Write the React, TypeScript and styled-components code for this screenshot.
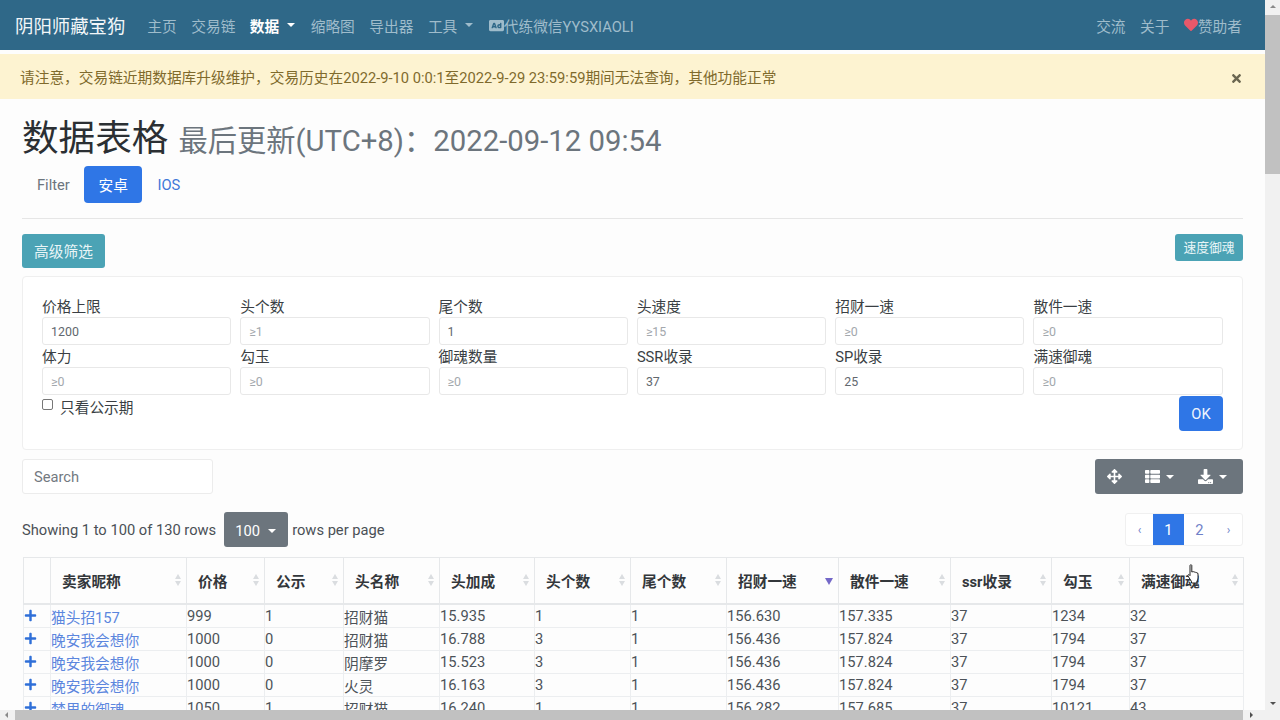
import { styled, createGlobalStyle } from "styled-components";
import { FaAd, FaArrowsAlt, FaDownload, FaHeart, FaPlus, FaThList, FaTimes } from "react-icons/fa";

const GlobalStyle = createGlobalStyle`
  html, body {
    margin: 0;
    padding: 0;
    height: 100%;
    overflow: hidden;
    background: #fdfdfd;
  }
  * {
    box-sizing: border-box;
  }
  body {
    font-family: Roboto, "Noto Sans CJK SC", sans-serif;
    font-size: 14.7px;
    color: #3a3f44;
  }
`;

const Shell = styled.div`
  position: relative;
  width: 1280px;
  height: 720px;
  display: grid;
  grid-template-columns: 1265px 15px;
  grid-template-rows: 710px 10px;
  overflow: hidden;
  background: #fdfdfd;
`;

const Page = styled.div`
  overflow: hidden;
`;

const VScroll = styled.div`
  background: #f1f1f1;
  display: flex;
  flex-direction: column;
  align-items: stretch;
  justify-content: space-between;
  padding-top: 5px;
  padding-bottom: 5px;
`;

const VThumb = styled.div`
  height: 159px;
  margin-top: 7px;
  margin-bottom: auto;
  background: #c1c1c1;
`;

const Arrow = styled.span<{ $dir: "up" | "down" | "left" | "right" }>`
  display: block;
  flex: none;
  align-self: center;
  width: 0;
  height: 0;
  border-style: solid;
  border-color: transparent;
  border-width: 3.5px;
  ${(p) => (p.$dir === "up" ? "border-bottom-color: #8a8a8a; border-top-width: 0;" : "")}
  ${(p) => (p.$dir === "down" ? "border-top-color: #505050; border-bottom-width: 0;" : "")}
  ${(p) => (p.$dir === "left" ? "border-right-color: #8a8a8a; border-left-width: 0;" : "")}
  ${(p) => (p.$dir === "right" ? "border-left-color: #505050; border-right-width: 0;" : "")}
`;

const HScroll = styled.div`
  background: #f1f1f1;
  padding: 0 5px;
  display: flex;
  align-items: center;
  gap: 7px;
  grid-column: 1;
  height: 10px;
`;

const HThumb = styled.div`
  flex: none;
  width: 1228px;
  height: 100%;
  background: #c1c1c1;
`;

const Corner = styled.div`
  background: #f1f1f1;
`;

const Nav = styled.nav`
  height: 50px;
  background: #2f6888;
  display: flex;
  align-items: center;
  padding: 0 23px 0 15px;
`;

const Brand = styled.div`
  font-size: 18.4px;
  color: #f2f6f8;
  margin-right: 22px;
  white-space: nowrap;
`;

const NavItem = styled.div<{ $active?: boolean; $last?: boolean }>`
  display: flex;
  align-items: center;
  white-space: nowrap;
  margin-right: ${(p) => (p.$last ? 0 : 14.5)}px;
  color: ${(p) => (p.$active ? "#ffffff" : "#9fbccb")};
  font-weight: ${(p) => (p.$active ? 700 : 400)};
`;

const NavSpacer = styled.div`
  flex: 1;
`;

const Caret = styled.span<{ $gap?: number }>`
  display: inline-block;
  margin-left: ${(p) => p.$gap ?? 8}px;
  margin-right: 1px;
  border-top: 4.5px solid currentColor;
  border-left: 4.5px solid transparent;
  border-right: 4.5px solid transparent;
`;

const Alert = styled.div`
  margin-top: 4px;
  height: 45px;
  background: #fdf3d1;
  color: #7f6a2c;
  display: flex;
  align-items: center;
  justify-content: space-between;
  padding: 0 22px 0 20px;
`;

const CloseIcon = styled(FaTimes)`
  color: #6b6650;
  font-size: 13px;
  margin-top: 3px;
`;

const Content = styled.div`
  padding: 0 22px;
`;

const Title = styled.h1`
  margin: 14px 0 0;
  height: 53px;
  font-size: 36.6px;
  line-height: 52px;
  font-weight: 400;
  color: #2b2f33;
  white-space: nowrap;
`;

const TitleNote = styled.small`
  font-size: 29.3px;
  color: #6c757d;
  margin-left: 1px;
`;

const Tabs = styled.div`
  display: flex;
  align-items: center;
  margin-top: 0;
  height: 37px;
  padding-left: 15px;
`;

const Tab = styled.div<{ $kind?: "muted" | "active" | "link" }>`
  height: 37px;
  display: flex;
  align-items: center;
  border-radius: 4px;
  margin-right: ${(p) => (p.$kind === "muted" ? 14 : 15)}px;
  color: ${(p) => (p.$kind === "active" ? "#fff" : p.$kind === "link" ? "#3f78d8" : "#6c757d")};
  background: ${(p) => (p.$kind === "active" ? "#2f76e6" : "transparent")};
  padding: ${(p) => (p.$kind === "active" ? "0 14.6px" : "0")};
`;

const Rule = styled.hr`
  border: 0;
  border-top: 1px solid #e6e6e6;
  margin: 15px 0 15px;
`;

const ActionRow = styled.div`
  display: flex;
  justify-content: space-between;
  align-items: flex-start;
  height: 42px;
`;

const TealButton = styled.div<{ $small?: boolean }>`
  background: #4ba3b5;
  color: #e9f5f7;
  border-radius: 3px;
  display: flex;
  align-items: center;
  justify-content: center;
  width: ${(p) => (p.$small ? "68px" : "83px")};
  height: ${(p) => (p.$small ? "27px" : "34px")};
  padding-bottom: 2px;
  font-size: ${(p) => (p.$small ? "12.8px" : "14.7px")};
`;

const FilterPanel = styled.section`
  position: relative;
  height: 174px;
  background: #fff;
  border: 1px solid #efefef;
  border-radius: 4px;
  padding: 19px 19px 0;
`;

const FilterGrid = styled.div`
  display: grid;
  grid-template-columns: repeat(6, 189.3px);
  column-gap: 9px;
`;

const Field = styled.label`
  display: flex;
  flex-direction: column;
  height: 50px;
`;

const FieldLabel = styled.span`
  height: 21px;
  line-height: 22px;
  color: #3a3f44;
  white-space: nowrap;
`;

const FieldInput = styled.div<{ $placeholder?: boolean }>`
  height: 28px;
  border: 1px solid #e8e8e8;
  border-radius: 3px;
  background: #fff;
  padding: 0 8px;
  display: flex;
  align-items: center;
  font-size: 12.4px;
  color: ${(p) => (p.$placeholder ? "#a3a8ad" : "#62686e")};
`;

const CheckRow = styled.div`
  display: flex;
  align-items: center;
  margin-top: -1px;
  height: 22px;
`;

const CheckBox = styled.span`
  width: 11px;
  height: 11px;
  border: 1px solid #777;
  border-radius: 2px;
  background: #fff;
  margin-right: 7px;
  margin-top: -3px;
`;

// the OK button sits over the bottom corner of the filter grid
const OkButton = styled.div`
  position: absolute;
  right: 19px;
  top: 119px;
  width: 44px;
  height: 35px;
  border-radius: 4px;
  background: #2f76e6;
  color: #eef4fd;
  display: flex;
  align-items: center;
  justify-content: center;
`;

const SearchRow = styled.div`
  display: flex;
  justify-content: space-between;
  margin-top: 9px;
  height: 35px;
`;

const SearchBox = styled.div`
  width: 191px;
  height: 35px;
  background: #fff;
  border: 1px solid #ececec;
  border-radius: 3px;
  padding: 0 11px;
  display: flex;
  align-items: center;
  color: #73797f;
`;

const ToolGroup = styled.div`
  width: 148px;
  height: 35px;
  background: #6c757d;
  border-radius: 3px;
  color: #fff;
  display: flex;
  align-items: center;
  font-size: 15px;
`;

const ToolSlot = styled.div<{ $width: number }>`
  width: ${(p) => p.$width}px;
  display: flex;
  align-items: center;
  justify-content: center;
`;

const InfoRow = styled.div`
  display: flex;
  justify-content: space-between;
  align-items: center;
  height: 35px;
  margin-top: 18px;
`;

const InfoText = styled.div`
  display: flex;
  align-items: center;
  color: #4a5056;
`;

const PageSize = styled.div`
  width: 64px;
  height: 35px;
  margin: 0 4px 0 8px;
  border-radius: 3px;
  background: #6c757d;
  color: #fff;
  display: flex;
  align-items: center;
  justify-content: center;
  padding-top: 2px;
`;

const Pager = styled.div`
  display: flex;
  height: 33px;
  background: #fff;
  border: 1px solid #f0f0f0;
  border-radius: 3px;
`;

const PageCell = styled.div<{ $active?: boolean; $w: number; $small?: boolean }>`
  width: ${(p) => p.$w}px;
  display: flex;
  align-items: center;
  justify-content: center;
  background: ${(p) => (p.$active ? "#2f76e6" : "transparent")};
  color: ${(p) => (p.$active ? "#fff" : "#6f80c8")};
  font-size: ${(p) => (p.$small ? "12px" : "14.7px")};
`;

const DataTable = styled.table`
  margin-top: 10px;
  width: 1220px;
  margin-left: 1px;
  table-layout: fixed;
  border-collapse: collapse;
  background: #fdfdfd;
`;

const HeadCell = styled.th`
  position: relative;
  height: 46px;
  padding: 0 0 0 11px;
  text-align: left;
  font-weight: 700;
  font-size: 14.7px;
  color: #33373b;
  border: 1px solid #e6e8ea;
  border-bottom-width: 2px;
  white-space: nowrap;
`;

const SortMark = styled.span`
  position: absolute;
  right: 5px;
  top: 50%;
  transform: translateY(-50%);
  display: flex;
  flex-direction: column;
  gap: 2px;
  color: #dadde0;
`;

const SortUp = styled.i`
  display: block;
  border-bottom: 5px solid currentColor;
  border-left: 3.5px solid transparent;
  border-right: 3.5px solid transparent;
`;

const SortDown = styled.i<{ $active?: boolean }>`
  display: block;
  border-top: ${(p) => (p.$active ? "7px solid #7468c8" : "5px solid currentColor")};
  border-left: ${(p) => (p.$active ? 4 : 3.5)}px solid transparent;
  border-right: ${(p) => (p.$active ? 4 : 3.5)}px solid transparent;
  margin-top: ${(p) => (p.$active ? 3 : 0)}px;
`;

const Cell = styled.td`
  height: 23px;
  padding: 1px 0 0;
  border: 1px solid #eceef0;
  color: #4c5258;
  white-space: nowrap;
  overflow: hidden;
`;

const PlusCell = styled(Cell)`
  color: #2f6fd8;
  font-size: 13px;
  padding: 3px 0 0 0;
`;

const NameLink = styled.span`
  color: #5b86de;
`;

// mouse pointer caught in the recording, over the last header
const HandCursor = styled.svg`
  position: absolute;
  left: 1187px;
  top: 564px;
`;

const columns = [
  { key: "expand", label: "", width: 27 },
  { key: "name", label: "卖家昵称", width: 136 },
  { key: "price", label: "价格", width: 78 },
  { key: "notice", label: "公示", width: 79 },
  { key: "head", label: "头名称", width: 96 },
  { key: "bonus", label: "头加成", width: 95 },
  { key: "headCount", label: "头个数", width: 96 },
  { key: "tailCount", label: "尾个数", width: 96 },
  { key: "lucky", label: "招财一速", width: 112, sorted: true },
  { key: "spread", label: "散件一速", width: 112 },
  { key: "ssr", label: "ssr收录", width: 101 },
  { key: "jade", label: "勾玉", width: 78 },
  { key: "full", label: "满速御魂", width: 114 },
];

const rows = [
  ["猫头招157", "999", "1", "招财猫", "15.935", "1", "1", "156.630", "157.335", "37", "1234", "32"],
  ["晚安我会想你", "1000", "0", "招财猫", "16.788", "3", "1", "156.436", "157.824", "37", "1794", "37"],
  ["晚安我会想你", "1000", "0", "阴摩罗", "15.523", "3", "1", "156.436", "157.824", "37", "1794", "37"],
  ["晚安我会想你", "1000", "0", "火灵", "16.163", "3", "1", "156.436", "157.824", "37", "1794", "37"],
  ["梦里的御魂", "1050", "1", "招财猫", "16.240", "1", "1", "156.282", "157.685", "37", "10121", "43"],
];

const filters = [
  { label: "价格上限", value: "1200" },
  { label: "头个数", hint: "≥1" },
  { label: "尾个数", value: "1" },
  { label: "头速度", hint: "≥15" },
  { label: "招财一速", hint: "≥0" },
  { label: "散件一速", hint: "≥0" },
  { label: "体力", hint: "≥0" },
  { label: "勾玉", hint: "≥0" },
  { label: "御魂数量", hint: "≥0" },
  { label: "SSR收录", value: "37" },
  { label: "SP收录", value: "25" },
  { label: "满速御魂", hint: "≥0" },
];

export default function App() {
  return (
    <Shell>
      <GlobalStyle />
      <Page>
        <Nav>
          <Brand>阴阳师藏宝狗</Brand>
          <NavItem>主页</NavItem>
          <NavItem>交易链</NavItem>
          <NavItem $active>
            数据
            <Caret />
          </NavItem>
          <NavItem>缩略图</NavItem>
          <NavItem>导出器</NavItem>
          <NavItem>
            工具
            <Caret />
          </NavItem>
          <NavItem>
            <FaAd size={15} />
            代练微信YYSXIAOLI
          </NavItem>
          <NavSpacer />
          <NavItem>交流</NavItem>
          <NavItem>关于</NavItem>
          <NavItem $last>
            <FaHeart size={14} color="#e8586a" />
            赞助者
          </NavItem>
        </Nav>
        <Alert>
          请注意，交易链近期数据库升级维护，交易历史在2022-9-10 0:0:1至2022-9-29 23:59:59期间无法查询，其他功能正常
          <CloseIcon />
        </Alert>
        <Content>
          <Title>
            数据表格 <TitleNote>最后更新(UTC+8)：2022-09-12 09:54</TitleNote>
          </Title>
          <Tabs>
            <Tab $kind="muted">Filter</Tab>
            <Tab $kind="active">安卓</Tab>
            <Tab $kind="link">IOS</Tab>
          </Tabs>
          <Rule />
          <ActionRow>
            <TealButton>高级筛选</TealButton>
            <TealButton $small>速度御魂</TealButton>
          </ActionRow>
          <FilterPanel>
            <FilterGrid>
              {filters.map((f) => (
                <Field key={f.label}>
                  <FieldLabel>{f.label}</FieldLabel>
                  <FieldInput $placeholder={!f.value}>{f.value ?? f.hint}</FieldInput>
                </Field>
              ))}
            </FilterGrid>
            <CheckRow>
              <CheckBox />
              只看公示期
            </CheckRow>
            <OkButton>OK</OkButton>
          </FilterPanel>
          <SearchRow>
            <SearchBox>Search</SearchBox>
            <ToolGroup>
              <ToolSlot $width={39}>
                <FaArrowsAlt />
              </ToolSlot>
              <ToolSlot $width={52}>
                <FaThList />
                <Caret $gap={6} />
              </ToolSlot>
              <ToolSlot $width={54}>
                <FaDownload />
                <Caret $gap={6} />
              </ToolSlot>
            </ToolGroup>
          </SearchRow>
          <InfoRow>
            <InfoText>
              Showing 1 to 100 of 130 rows
              <PageSize>
                100
                <Caret />
              </PageSize>
              rows per page
            </InfoText>
            <Pager>
              <PageCell $w={27} $small>‹</PageCell>
              <PageCell $w={31} $active>1</PageCell>
              <PageCell $w={31}>2</PageCell>
              <PageCell $w={27} $small>›</PageCell>
            </Pager>
          </InfoRow>
          <DataTable>
            <colgroup>
              {columns.map((c) => (
                <col key={c.key} width={c.width} />
              ))}
            </colgroup>
            <thead>
              <tr>
                {columns.map((c) => (
                  <HeadCell key={c.key}>
                    {c.label}
                    {c.label && (
                      <SortMark>
                        {!c.sorted && <SortUp />}
                        <SortDown $active={c.sorted} />
                      </SortMark>
                    )}
                  </HeadCell>
                ))}
              </tr>
            </thead>
            <tbody>
              {rows.map((row, i) => (
                <tr key={i}>
                  <PlusCell>
                    <FaPlus />
                  </PlusCell>
                  <Cell>
                    <NameLink>{row[0]}</NameLink>
                  </Cell>
                  {row.slice(1).map((v, j) => (
                    <Cell key={j}>{v}</Cell>
                  ))}
                </tr>
              ))}
            </tbody>
          </DataTable>
        </Content>
      </Page>
      <VScroll>
        <Arrow $dir="up" />
        <VThumb />
        <Arrow $dir="down" />
      </VScroll>
      <HScroll>
        <Arrow $dir="left" />
        <HThumb />
        <Arrow $dir="right" />
      </HScroll>
      <Corner />
      <HandCursor width="13" height="20" viewBox="0 0 13 20">
        <path
          d="M3 1.500c0-1 1.800-1 1.800 0V8l1-.3c.5-.2 1 0 1.200.4l.8-.1c.5 0 .9.200 1 .6l.8 0c.9 0 1.400.6 1.400 1.400V14c0 1.500-.6 2.500-1.200 3.500V19H4.500v-1.500L1 12c-.6-.9.6-2 1.500-1L3 11.500z"
          fill="#fff"
          stroke="#222"
          strokeWidth="1"
        />
      </HandCursor>
    </Shell>
  );
}
